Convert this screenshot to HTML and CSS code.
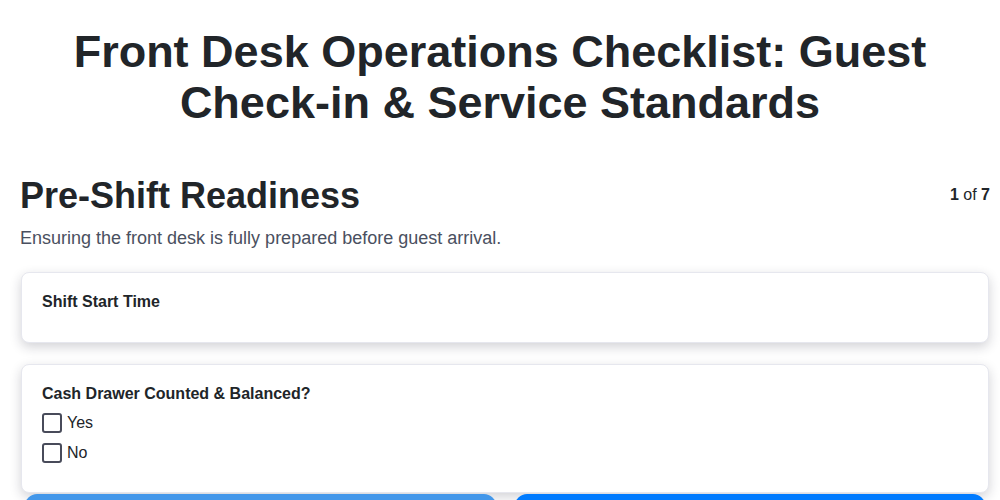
FILE: index.html
```html
<!DOCTYPE html>
<html lang="en">
<head>
<meta charset="utf-8">
<title>Front Desk Operations Checklist</title>
<link rel="stylesheet" href="styles.css">
</head>
<body>
<div class="page">
  <h1 class="title">Front Desk Operations Checklist: Guest Check-in &amp; Service Standards</h1>
  <section class="step">
    <div class="step-head">
      <h2 class="step-title">Pre-Shift Readiness</h2>
      <div class="step-count"><b>1</b> of <b>7</b></div>
    </div>
    <p class="step-desc">Ensuring the front desk is fully prepared before guest arrival.</p>
    <div class="card card-time">
      <div class="label">Shift Start Time</div>
    </div>
    <div class="card">
      <div class="label">Cash Drawer Counted &amp; Balanced?</div>
      <label class="option"><span class="box"></span>Yes</label>
      <label class="option"><span class="box"></span>No</label>
    </div>
    <div class="nav">
      <button class="btn btn-prev">Previous</button>
      <button class="btn btn-next">Next</button>
    </div>
  </section>
</div>
</body>
</html>
```

FILE: styles.css
```css
* { box-sizing: border-box; }
body {
  margin: 0;
  background: #ffffff;
  font-family: "Liberation Sans", Arial, sans-serif;
  color: #212529;
}
.page {
  padding: 26px 10px 0 20px;
}
.title {
  margin: 0;
  font-size: 45px;
  line-height: 51px;
  font-weight: 700;
  text-align: center;
  color: #212529;
  padding: 0 20px 0 10px;
}
.step {
  margin-top: 46px;
}
.step-head {
  display: flex;
  justify-content: space-between;
  align-items: flex-start;
}
.step-title {
  margin: 0;
  font-size: 36px;
  line-height: 44px;
  font-weight: 700;
  color: #212529;
}
.step-count {
  font-size: 16px;
  margin-top: 12px;
  color: #212529;
}
.step-count b { font-weight: 700; }
.step-desc {
  margin: 9px 0 0 0;
  font-size: 18px;
  line-height: 22px;
  color: #4a5060;
}
.card {
  margin-top: 21px;
  margin-right: 1px;
  margin-left: 1px;
  background: #fff;
  border: 1px solid #e6e7ee;
  border-radius: 8px;
  padding: 19px 20px 24px 20px;
  box-shadow: 0 4px 12px rgba(30, 30, 50, 0.2);
}
.card-time {
  margin-top: 23px;
  height: 71px;
}
.label {
  font-size: 16px;
  font-weight: 700;
  line-height: 20px;
  color: #212529;
}
.card .label + .option { margin-top: 4px; }
.option {
  display: flex;
  align-items: center;
  gap: 5px;
  font-size: 16px;
  line-height: 20px;
  color: #212529;
  height: 30px;
}
.box {
  width: 20px;
  height: 20px;
  border: 2px solid #484b5a;
  border-radius: 3px;
  background: #fff;
}
.nav {
  display: flex;
  gap: 19px;
  padding: 0 5px;
  margin-top: 1px;
}
.btn {
  flex: 1;
  height: 48px;
  border: none;
  border-radius: 12px;
  font-family: inherit;
  font-size: 16px;
  font-weight: 700;
  color: #fff;
}
.btn-prev { background: #4397ea; }
.btn-next { background: #007bff; }
```
